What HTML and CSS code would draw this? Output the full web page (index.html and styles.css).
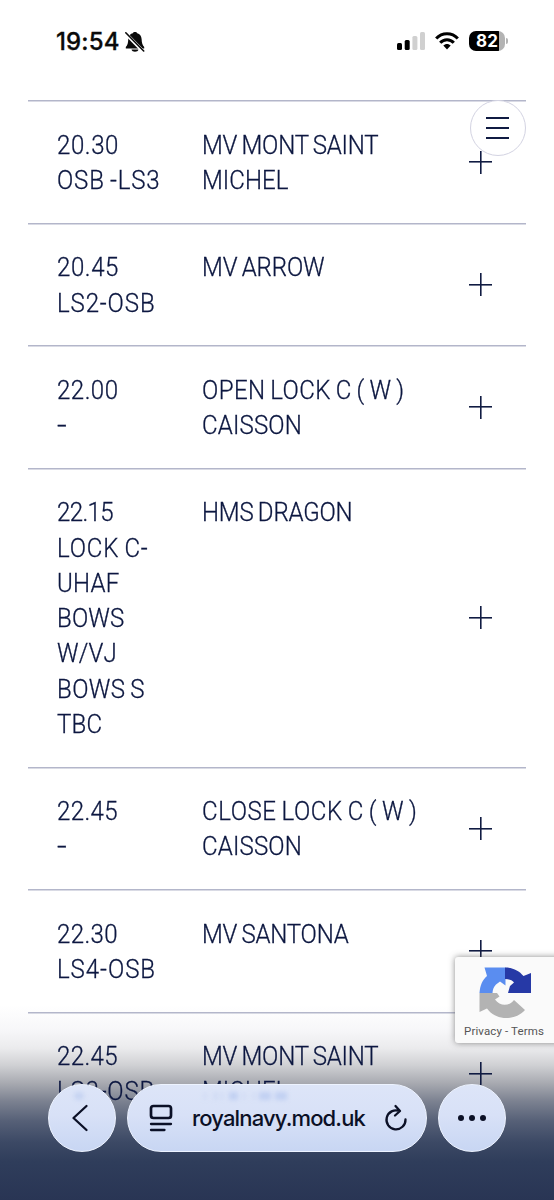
FILE: index.html
```html
<!DOCTYPE html>
<html lang="en">
<head>
<meta charset="utf-8">
<title>Shipping movements</title>
<link rel="stylesheet" href="styles.css">
</head>
<body>
<div class="screen">
  <header class="status">
    <span class="clock" data-w="63.5">19:54</span>
    <svg class="bell" width="20" height="22" viewBox="0 0 20 22"><path d="M.8 17.500V16c2-2 2.200-4 2.500-8C3.600 4.500 5.600 2.800 7.800 2.300 8.200.4 11.800.4 12.200 2.300 14.900 3 16.400 5 16.600 8c.2 4 .8 6 2.600 8v1.500zM6.500 18.500h7c-.5 3-6.500 3-7 0z" fill="#0a0a0a"/><path d="M.2 2 18.500 20.800" stroke="#fff" stroke-width="3.400"/><path d="M.8 1.800 18.700 20" stroke="#0a0a0a" stroke-width="1.600" stroke-linecap="round"/></svg>
    <svg class="signal" width="28" height="18" viewBox="0 0 28 18"><rect x="0" y="11" width="5" height="7" rx="1.500"/><rect x="7.700" y="8" width="5" height="10" rx="1.500"/><g fill="#d0d0d0"><rect x="15.400" y="4" width="5" height="14" rx="1.500"/><rect x="23" y="0" width="5" height="18" rx="1.500"/></g></svg>
    <svg class="wifi" width="24" height="18" viewBox="0 0 24 18"><g fill="none" stroke="#000" stroke-width="3"><path d="M1.200 6.600C7 .1 17 .1 22.800 6.600"/><path d="M5.200 10.700c3.700-4.100 9.900-4.100 13.600 0"/></g><path d="M8.300 13.600c2-2.200 5.400-2.200 7.400 0L12 17.500z"/></svg>
    <div class="battery"><span>82</span></div>
  </header>

  <main class="list">
    <section class="row"><div class="when"><span data-w="62">20.30</span><span data-w="103.5">OSB -LS3</span></div><div class="what"><span data-w="176.5">MV MONT SAINT</span><span data-w="86.5">MICHEL</span></div><i class="plus"></i></section>
    <section class="row"><div class="when"><span data-w="62">20.45</span><span data-w="98.5">LS2-OSB</span></div><div class="what"><span data-w="122.5">MV ARROW</span></div><i class="plus"></i></section>
    <section class="row"><div class="when"><span data-w="61.5">22.00</span><span class="dash">-</span></div><div class="what"><span data-w="202.5">OPEN LOCK C ( W )</span><span data-w="100">CAISSON</span></div><i class="plus"></i></section>
    <section class="row tall"><div class="when"><span data-w="56">22.15</span><span data-w="91.5">LOCK C-</span><span data-w="62.5">UHAF</span><span data-w="67.5">BOWS</span><span data-w="60">W/VJ</span><span data-w="88">BOWS S</span><span data-w="45.5">TBC</span></div><div class="what"><span data-w="150.5">HMS DRAGON</span></div><i class="plus"></i></section>
    <section class="row"><div class="when"><span data-w="61">22.45</span><span class="dash">-</span></div><div class="what"><span data-w="215.5">CLOSE LOCK C ( W )</span><span data-w="100">CAISSON</span></div><i class="plus"></i></section>
    <section class="row"><div class="when"><span data-w="61">22.30</span><span data-w="99">LS4-OSB</span></div><div class="what"><span data-w="146.5">MV SANTONA</span></div><i class="plus"></i></section>
    <section class="row"><div class="when"><span data-w="61">22.45</span><span data-w="98">LS3-OSB</span></div><div class="what"><span data-w="176.5">MV MONT SAINT</span><span data-w="86.5">MICHEL</span></div><i class="plus"></i></section>
  </main>

  <button class="menu" aria-label="Menu"><i></i><i></i><i></i></button>

  <aside class="captcha">
    <svg width="53" height="52" viewBox="0 0 53 52"><path d="M.5 26C1 18 3.500 13 8 9L5.500.5H26.500V18.500L21 14.500 17 17.500C14.500 20 13.700 23 13.500 26Z" fill="#5a8df0"/><path d="M26 .5c8 0 14 3 18.500 8.500l7.500-3V26H29l2-7 4-3.500c-2-2.500-5-3.500-9-3.500z" fill="#2639a6"/><path d="M.5 26H18l2.500 3.500-4.500 3c5 7 14 7 19 .5L46 43C36 54 17 54 8 41.500L.5 45z" fill="#b3b3b3"/></svg>
    <span data-w="80">Privacy - Terms</span>
  </aside>

  <nav class="browser">
    <button class="glass round back" aria-label="Back"><svg width="18" height="28" viewBox="0 0 18 28"><path d="M15.500 2 2.500 14l13 12" /></svg></button>
    <div class="glass address">
      <svg class="tabs" width="24" height="28" viewBox="0 0 24 28"><rect x="2" y="2" width="20" height="12" rx="2.500"/><path d="M2 20h20M2 26h13.500"/></svg>
      <span class="host" data-w="173">royalnavy.mod.uk</span>
      <svg class="reload" width="24" height="28" viewBox="0 0 24 28"><path d="M15.500 7A9.500 9.500 0 1 0 21.500 15.500M11.500 2l4.500 5-5 4.500"/></svg>
    </div>
    <button class="glass round dots" aria-label="More"><i></i><i></i><i></i></button>
  </nav>
</div>
<script src="fit.js"></script>
</body>
</html>
```
FILE: styles.css
```css
* { box-sizing: border-box; }
body { margin: 0; }
button { padding: 0; font: inherit; }
.screen { position: relative; width: 554px; height: 1200px; overflow: hidden; color: #0c1740; font-family: Roboto, "Liberation Sans", sans-serif;
  background: linear-gradient(180deg, #fff 1005px, #f7f7f9 1030px, #ebebed 1048px, #d0d1d4 1065px, #a6a8af 1084px, #7c8291 1101px, #566077 1121px, #3c4965 1142px, #2f3d5b 1162px, #293554 1200px); }
[data-w], .dash { white-space: pre; display: block; width: max-content; }
.status { height: 100.250px; display: flex; align-items: flex-start; padding: 31px 0 0 56px; color: #0a0a0a; }
.clock { font: 500 24px/22px Inter, sans-serif; -webkit-text-stroke: .3px #0a0a0a; }
.bell { margin-left: 5px; }
.signal { margin: 1px 0 0 auto; }
.wifi { margin: 1px 10px 0 10px; }
.battery { position: relative; width: 36px; height: 20px; margin-right: 49px; border-radius: 7px; background: linear-gradient(90deg, #000 30px, #b3b3b3 30px); color: #fff; text-align: center; font: 700 17px/20px Inter, sans-serif; }
.battery::after { content: ""; position: absolute; right: -3px; top: 7px; width: 2px; height: 6px; border-radius: 0 2px 2px 0; background: #b3b3b3; }
.list { margin: 0 28px; }
.row { height: 122.500px; display: grid; grid-template-columns: 145.500px 1fr 23px; padding: 27.500px 34px 0 28.500px; background: linear-gradient(#b3b6ca, #b3b6ca) 0 0 / 100% 1.500px no-repeat; font-size: 25.300px; line-height: 35.250px; font-weight: 300; -webkit-text-stroke: .3px #0c1740; word-spacing: -1.500px; }
.row span { transform: scaleX(.95); transform-origin: 0 50%; }
.row .dash { transform: scaleX(1.350); }
.tall { height: 298.750px; }
.plus { align-self: center; position: relative; width: 23px; height: 23px; margin-top: -26px; background: linear-gradient(#101b42, #101b42) 0 50% / 23px 1.600px no-repeat, linear-gradient(#101b42, #101b42) 50% 0 / 1.600px 23px no-repeat; }
.menu { position: absolute; left: 469.500px; top: 100px; width: 56px; height: 56px; border: 1.500px solid #d3d3e2; border-radius: 50%; background: #fff; display: flex; flex-direction: column; align-items: center; justify-content: center; gap: 8px; }
.menu i { width: 23px; height: 2px; background: #101b42; }
.captcha { position: absolute; left: 455px; top: 957px; width: 110px; height: 86px; padding: 10px 0 0 9px; border-radius: 3px; background: #fafafa; box-shadow: 0 0 6px rgba(90,90,90,.7); color: #555; font-size: 11.500px; line-height: 14px; }
.captcha svg { display: block; margin: 0 0 5px 15px; }
.browser { position: absolute; left: 48px; top: 1084px; display: flex; gap: 11px; color: #0b1026; }
.glass { position: relative; height: 68px; border: 1.500px solid #edf3ff; background: linear-gradient(#dde5f8, #d8e1f7 45%, #c8d6f3); color: inherit; display: flex; align-items: center; justify-content: center; border-radius: 34px; }
.round { width: 68px; }
.glass svg { fill: none; stroke: #0b1026; stroke-width: 2.300; stroke-linecap: round; stroke-linejoin: round; }
.round svg { margin-right: 4px; }
.address { width: 300px; justify-content: flex-start; padding-left: 21px; }
.back::before, .address::before { content: ""; position: absolute; top: 7px; height: 8px; filter: blur(2px); opacity: .75; }
.back::before { left: 25px; width: 10px; border-radius: 4px; background: #c0cff0; }
.address::before { left: 76px; width: 84px; background: linear-gradient(90deg, #c6d3f1 2px, transparent 2px 10px, #c6d3f1 10px 13px, transparent 13px 17px, #c6d3f1 17px 19px, transparent 19px 25px, #b9caf0 25px 34px, transparent 34px 39px, #c6d3f1 39px 41px, transparent 41px 49px, #c6d3f1 49px 51px, transparent 51px 55px, #b9caf0 55px 67px, transparent 67px 71px, #b9caf0 71px 83px, transparent 83px); }
.tabs rect { stroke-width: 2.700; }
.host { margin-left: 19px; font: 500 22px/28px Inter, sans-serif; }
.reload { margin-left: 19px; }
.dots { gap: 5px; }
.dots i { width: 6px; height: 6px; border-radius: 50%; background: #0b1026; }
```
FILE: fit.js
```js
document.querySelectorAll('[data-w]').forEach(function (el) {
  var scale = el.closest('.row') ? 0.95 : 1;
  var width = el.getBoundingClientRect().width;
  el.style.letterSpacing = (el.dataset.w - width) / scale / el.textContent.length + 'px';
});
```
